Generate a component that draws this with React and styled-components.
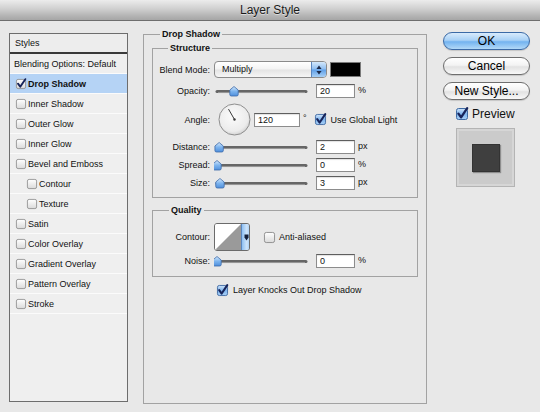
import React from 'react';
import styled, { createGlobalStyle } from 'styled-components';

const Global = createGlobalStyle`
  html, body { margin: 0; padding: 0; }
  body {
    background: #e8e8e8;
    font-family: "Liberation Sans", Arial, sans-serif;
    font-size: 9px;
    color: #111;
  }
`;

const Window = styled.div`
  width: 540px;
  height: 412px;
  overflow: hidden;
  background: #e8e8e8;
  display: flex;
  flex-direction: column;
`;

const TitleBar = styled.div`
  height: 20px;
  flex: none;
  border-bottom: 1px solid #6e6e6e;
  background: linear-gradient(#ececec, #cfcfcf 45%, #b3b3b3 80%, #a6a6a6);
  display: flex;
  align-items: center;
  justify-content: center;
  font-size: 12px;
  color: #1a1a1a;
  text-shadow: 0 1px 0 rgba(255, 255, 255, 0.5);
`;

const Body = styled.div`
  display: flex;
  align-items: flex-start;
  padding: 12px 0 0 9px;
`;

/* ---------- Sidebar ---------- */
const Sidebar = styled.div`
  flex: none;
  width: 119px;
  height: 369px;
  box-sizing: border-box;
  border: 1px solid #6d6d6d;
  background: #efefef;
  display: flex;
  flex-direction: column;
`;

const SideHeader = styled.div`
  height: 18px;
  flex: none;
  display: flex;
  align-items: center;
  padding-left: 5px;
  border-bottom: 2px solid #3a3a3a;
  background: #ededed;
`;

const SideRow = styled.div`
  height: 20px;
  flex: none;
  box-sizing: border-box;
  display: flex;
  align-items: center;
  gap: 2px;
  padding-left: ${(p) => p.$indent}px;
  border-bottom: 1px solid #fbfbfb;
  background: ${(p) => (p.$selected ? '#b5d3f5' : '#efefef')};
  font-weight: ${(p) => (p.$selected ? 'bold' : 'normal')};
`;

/* ---------- Group boxes ---------- */
const Group = styled.div`
  box-sizing: border-box;
  border: 1px solid #a2a2a2;
  display: flex;
  flex-direction: column;
`;

const MainGroup = styled(Group)`
  flex: none;
  margin: 1px 0 0 15px;
  width: 284px;
  height: 370px;
  padding: 0 8px;
`;

const SubGroup = styled(Group)`
  margin-top: ${(p) => p.$top}px;
  padding-bottom: ${(p) => p.$bottom}px;
`;

const Legend = styled.div`
  align-self: flex-start;
  height: 11px;
  line-height: 11px;
  margin: -6px 0 0 ${(p) => p.$indent}px;
  padding: 0 2px;
  font-weight: bold;
  background: #e8e8e8;
`;

const Field = styled.div`
  display: flex;
  align-items: center;
  height: ${(p) => p.$h}px;
  margin-top: ${(p) => p.$top}px;
  padding-left: ${(p) => p.$pad || 0}px;
`;

const Label = styled.span`
  flex: none;
  width: 57px;
  text-align: right;
  margin-right: ${(p) => p.$gap || 4}px;
`;

const NumBox = styled.div`
  flex: none;
  width: ${(p) => p.$w || 39}px;
  height: 14px;
  box-sizing: border-box;
  margin-left: ${(p) => p.$left || 0}px;
  border: 1px solid #8c8c8c;
  border-top-color: #5e5e5e;
  background: #fff;
  box-shadow: inset 0 1px 1px rgba(0, 0, 0, 0.12);
  padding-left: 3px;
  line-height: 12px;
`;

const Unit = styled.span`
  margin-left: 3px;
  margin-bottom: 3px;
`;

const Text = styled.span`
  margin-left: ${(p) => p.$left || 0}px;
  white-space: nowrap;
`;

/* ---------- Controls ---------- */
const Select = styled.div`
  flex: none;
  width: 113px;
  height: 17px;
  box-sizing: border-box;
  border: 1px solid #8a8a8a;
  border-radius: 4px;
  overflow: hidden;
  display: flex;
  background: linear-gradient(#ffffff, #f3f3f3 48%, #e4e4e4 52%, #f6f6f6);
`;

const SelectText = styled.span`
  flex: 1;
  padding-left: 7px;
  line-height: 15px;
`;

const SelectArrow = styled.span`
  flex: none;
  width: 14px;
  border-left: 1px solid #5a86c0;
  background: linear-gradient(#d4e8fb, #8dbdf0 48%, #5e9fe8 52%, #a8d0f6);
  display: flex;
  align-items: center;
  justify-content: center;
`;

const Swatch = styled.div`
  flex: none;
  width: 31px;
  height: 15px;
  box-sizing: border-box;
  margin-left: 3px;
  background: #000;
  border: 1px solid #7a7a7a;
`;

const SliderSvg = styled.svg`
  flex: none;
  display: block;
  margin-right: 8px;
`;

const DialSvg = styled.svg`
  flex: none;
  display: block;
`;

const CheckSvg = styled.svg`
  flex: none;
  display: block;
  overflow: visible;
  margin-left: ${(p) => p.$left || 0}px;
`;

const ContourBox = styled.div`
  flex: none;
  width: 36px;
  height: 28px;
  box-sizing: border-box;
  border: 1px solid #6b6b6b;
  border-radius: 3px;
  overflow: hidden;
  display: flex;
`;

const ContourArrow = styled.span`
  flex: none;
  width: 8px;
  border-left: 1px solid #5a86c0;
  background: linear-gradient(90deg, #8fc0f2, #cfe5fb 60%, #9cc7f3);
  display: flex;
  align-items: center;
  justify-content: center;
`;

/* ---------- Right column ---------- */
const RightCol = styled.div`
  flex: none;
  width: 87px;
  margin: -1px 0 0 16px;
  display: flex;
  flex-direction: column;
  gap: 7px;
`;

const Button = styled.div`
  height: 18px;
  box-sizing: border-box;
  border-radius: 9px;
  border: 1px solid ${(p) => (p.$primary ? '#3b6aa6' : '#6e6e6e')};
  background: ${(p) =>
    p.$primary
      ? 'linear-gradient(#d8ebfc 0%, #a9d1f6 45%, #73b3f0 55%, #b2d9f8 100%)'
      : 'linear-gradient(#ffffff 0%, #f3f3f3 45%, #e2e2e2 55%, #f8f8f8 100%)'};
  box-shadow: 0 1px 1px rgba(0, 0, 0, 0.15);
  font-size: 12px;
  color: #000;
  display: flex;
  align-items: center;
  justify-content: center;
`;

const PreviewRow = styled.div`
  display: flex;
  align-items: center;
  gap: 4px;
  height: 12px;
  margin-top: 1px;
  padding-left: 13px;
  font-size: 12px;
`;

const PreviewBox = styled.div`
  margin: 1px 0 0 13px;
  width: 59px;
  height: 59px;
  box-sizing: border-box;
  background: #cbcbcb;
  border: 1px solid #b4b4b4;
  box-shadow: inset 0 0 0 2px #d6d6d6;
  display: flex;
  align-items: center;
  justify-content: center;
`;

const PreviewSquare = styled.div`
  width: 28px;
  height: 28px;
  box-sizing: border-box;
  background: #3f3f3f;
  border: 1px solid #333;
  box-shadow: 1px 1px 1px rgba(0, 0, 0, 0.3);
`;

/* ---------- drawings ---------- */
function useSafeId() {
  return React.useId().replace(/[^a-zA-Z0-9]/g, '');
}

function Check({ on, size = 11, plain, left }) {
  const id = useSafeId();
  const blue = on && !plain;
  return (
    <CheckSvg width={size} height={size} viewBox="0 0 12 12" $left={left}>
      <defs>
        <linearGradient id={id + 'u'} x1="0" y1="0" x2="0" y2="1">
          <stop offset="0" stopColor="#ffffff" />
          <stop offset="1" stopColor="#dadada" />
        </linearGradient>
        <linearGradient id={id + 'c'} x1="0" y1="0" x2="0" y2="1">
          <stop offset="0" stopColor="#cfe4fa" />
          <stop offset="0.5" stopColor="#7fb5ee" />
          <stop offset="1" stopColor="#a9d0f6" />
        </linearGradient>
      </defs>
      <rect
        x="0.5"
        y="0.5"
        width="11"
        height="11"
        rx="2"
        fill={`url(#${id}${blue ? 'c' : 'u'})`}
        stroke={blue ? '#3f6aa3' : '#8b8b8b'}
      />
      {on && (
        <path
          d="M2.4 5.6 L5.1 9.3 L11.2 0.2"
          fill="none"
          stroke="#17245a"
          strokeWidth="2.3"
          strokeLinecap="round"
          strokeLinejoin="round"
        />
      )}
    </CheckSvg>
  );
}

function Slider({ pct }) {
  const id = useSafeId();
  const x = 3 + pct * 85;
  return (
    <SliderSvg width="94" height="14" viewBox="0 0 94 14">
      <defs>
        <linearGradient id={id} x1="0" y1="0" x2="0" y2="1">
          <stop offset="0" stopColor="#d7ebfd" />
          <stop offset="0.5" stopColor="#7db4ee" />
          <stop offset="1" stopColor="#4f8fdc" />
        </linearGradient>
      </defs>
      <line x1="3" y1="7.5" x2="92" y2="7.5" stroke="#666" strokeWidth="3" strokeLinecap="round" />
      <line x1="4" y1="8.6" x2="91" y2="8.6" stroke="#a8a8a8" strokeWidth="0.8" />
      <path
        d={`M${x} 2.5 L${x + 4.2} 6 L${x + 4.2} 10.5 Q${x + 4.2} 12 ${x + 2.7} 12 L${x - 2.7} 12 Q${x - 4.2} 12 ${x - 4.2} 10.5 L${x - 4.2} 6 Z`}
        fill={`url(#${id})`}
        stroke="#3d6aa8"
        strokeWidth="0.8"
      />
    </SliderSvg>
  );
}

function Dial({ angle }) {
  const id = useSafeId();
  const r = (angle * Math.PI) / 180;
  const cx = 16.5;
  const cy = 16.5;
  return (
    <DialSvg width="33" height="33" viewBox="0 0 33 33">
      <defs>
        <radialGradient id={id} cx="0.45" cy="0.4" r="0.6">
          <stop offset="0" stopColor="#fbfbfb" />
          <stop offset="0.8" stopColor="#ececec" />
          <stop offset="1" stopColor="#d4d4d4" />
        </radialGradient>
      </defs>
      <circle cx={cx} cy={cy} r="15.5" fill={`url(#${id})`} stroke="#8e8e8e" />
      <line x1={cx} y1={cy} x2={cx + Math.cos(r) * 12} y2={cy - Math.sin(r) * 12} stroke="#3a3a3a" strokeWidth="1" />
      <circle cx={cx} cy={cy} r="1.2" fill="#3a3a3a" />
    </DialSvg>
  );
}

const sideItems = [
  { label: 'Drop Shadow', checked: true, selected: true },
  { label: 'Inner Shadow' },
  { label: 'Outer Glow' },
  { label: 'Inner Glow' },
  { label: 'Bevel and Emboss' },
  { label: 'Contour', sub: true },
  { label: 'Texture', sub: true },
  { label: 'Satin' },
  { label: 'Color Overlay' },
  { label: 'Gradient Overlay' },
  { label: 'Pattern Overlay' },
  { label: 'Stroke' },
];

const sliders = [
  { label: 'Distance:', pct: 0.025, value: '2', unit: 'px' },
  { label: 'Spread:', pct: 0, value: '0', unit: '%' },
  { label: 'Size:', pct: 0.035, value: '3', unit: 'px' },
];

export default function App() {
  return (
    <Window>
      <Global />
      <TitleBar>Layer Style</TitleBar>
      <Body>
        <Sidebar>
          <SideHeader>Styles</SideHeader>
          <SideRow $indent={4}>Blending Options: Default</SideRow>
          {sideItems.map((it) => (
            <SideRow key={it.label} $indent={it.sub ? 17 : 6} $selected={it.selected}>
              <Check on={it.checked} plain size={10} />
              <span>{it.label}</span>
            </SideRow>
          ))}
        </Sidebar>

        <MainGroup>
          <Legend $indent={8}>Drop Shadow</Legend>

          <SubGroup $top={8} $bottom={7}>
            <Legend $indent={15}>Structure</Legend>
            <Field $h={17} $top={7}>
              <Label>Blend Mode:</Label>
              <Select>
                <SelectText>Multiply</SelectText>
                <SelectArrow>
                  <svg width="6" height="10" viewBox="0 0 6 10">
                    <path d="M3 0.5 L5.6 4 L0.4 4 Z M3 9.5 L5.6 6 L0.4 6 Z" fill="#1c2a4a" />
                  </svg>
                </SelectArrow>
              </Select>
              <Swatch />
            </Field>
            <Field $h={14} $top={6}>
              <Label>Opacity:</Label>
              <Slider pct={0.2} />
              <NumBox>20</NumBox>
              <Unit>%</Unit>
            </Field>
            <Field $h={33} $top={5}>
              <Label $gap={8}>Angle:</Label>
              <Dial angle={120} />
              <NumBox $w={46} $left={3}>120</NumBox>
              <Unit>°</Unit>
              <Check on left={8} />
              <Text $left={5}>Use Global Light</Text>
            </Field>
            {sliders.map((s) => (
              <Field key={s.label} $h={14} $top={4}>
                <Label>{s.label}</Label>
                <Slider pct={s.pct} />
                <NumBox>{s.value}</NumBox>
                <Unit>{s.unit}</Unit>
              </Field>
            ))}
          </SubGroup>

          <SubGroup $top={12} $bottom={8}>
            <Legend $indent={16}>Quality</Legend>
            <Field $h={28} $top={7}>
              <Label>Contour:</Label>
              <ContourBox>
                <svg width="26" height="26" viewBox="0 0 26 26" style={{ display: 'block', flex: 'none' }}>
                  <rect width="26" height="26" fill="#fff" />
                  <path d="M0 26 L26 0 L26 26 Z" fill="#9a9a9a" />
                </svg>
                <ContourArrow>
                  <svg width="5" height="7" viewBox="0 0 5 7">
                    <path d="M0.5 0.5 H4.5 V3.5 L2.5 6.5 L0.5 3.5 Z" fill="#15203a" />
                  </svg>
                </ContourArrow>
              </ContourBox>
              <Check left={14} />
              <Text $left={4}>Anti-aliased</Text>
            </Field>
            <Field $h={14} $top={3}>
              <Label>Noise:</Label>
              <Slider pct={0} />
              <NumBox>0</NumBox>
              <Unit>%</Unit>
            </Field>
          </SubGroup>

          <Field $h={14} $top={6} $pad={65}>
            <Check on />
            <Text $left={5}>Layer Knocks Out Drop Shadow</Text>
          </Field>
        </MainGroup>

        <RightCol>
          <Button $primary>OK</Button>
          <Button>Cancel</Button>
          <Button>New Style...</Button>
          <PreviewRow>
            <Check on size={12} />
            <span>Preview</span>
          </PreviewRow>
          <PreviewBox>
            <PreviewSquare />
          </PreviewBox>
        </RightCol>
      </Body>
    </Window>
  );
}
